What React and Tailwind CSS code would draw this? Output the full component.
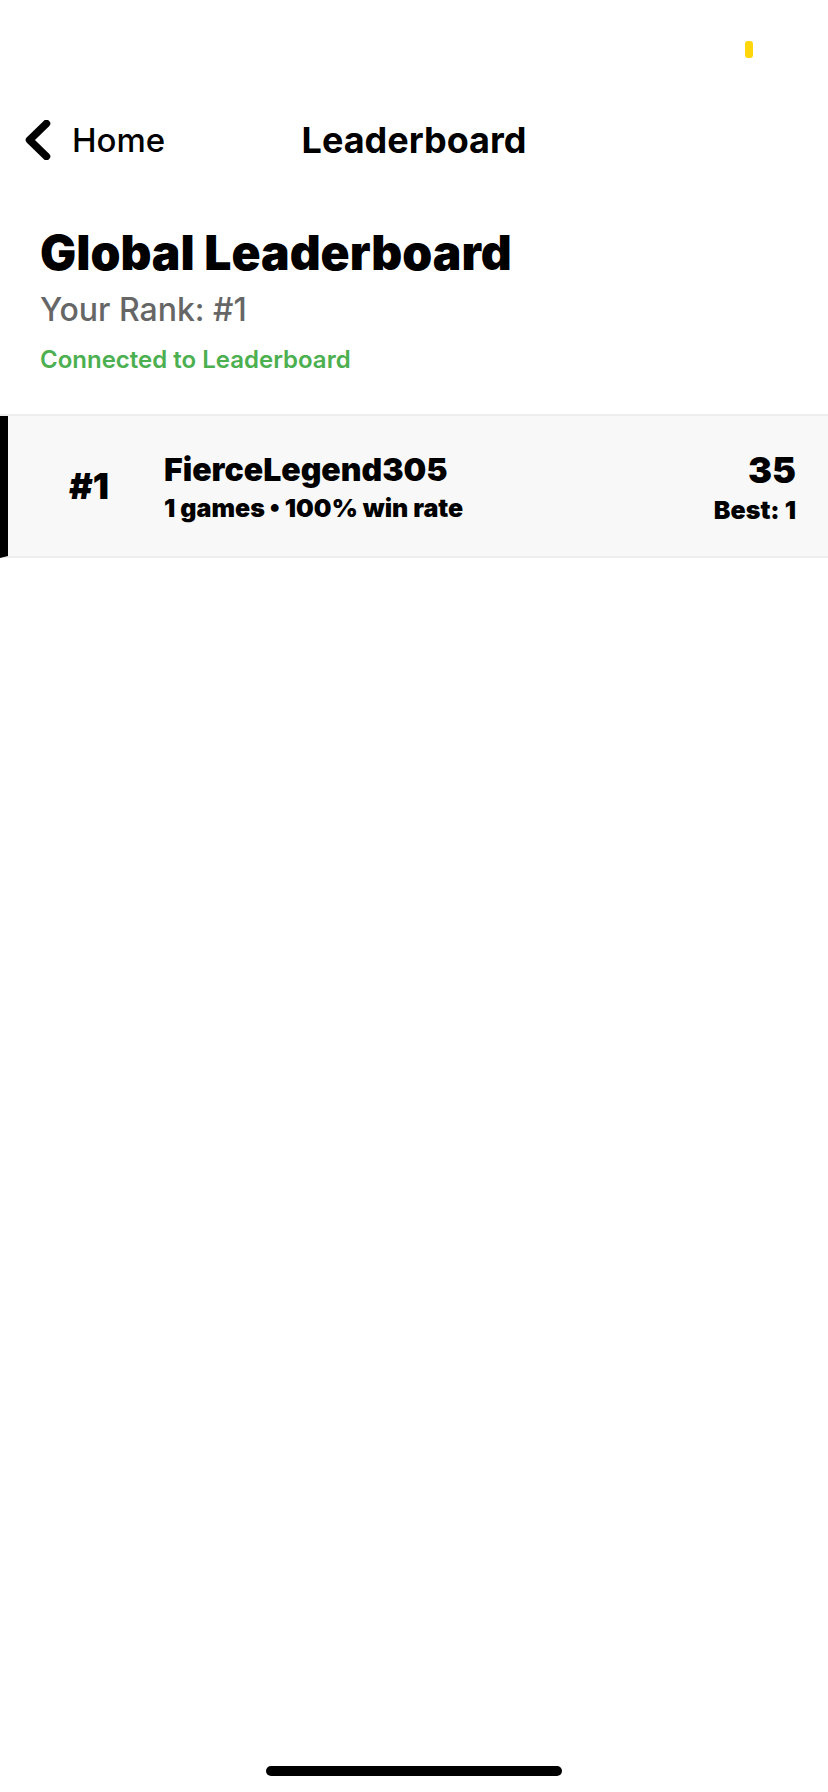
const players = [
  { rank: 1, name: "FierceLegend305", games: 1, winRate: 100, score: 35, best: 1 },
];

function StatusBar() {
  return (
    <div className="flex h-24 justify-end pt-[41px] pr-[75px]">
      <div className="h-[17px] w-2 rounded-[3px] bg-[#ffd60a]" />
    </div>
  );
}

function NavBar() {
  return (
    <nav className="grid h-22 grid-cols-[1fr_auto_1fr] items-center px-6">
      <a href="#home" className="flex items-center gap-5 text-[33px] leading-10 font-medium">
        <svg className="h-10 w-7" viewBox="0 0 28 40" fill="none" aria-hidden="true">
          <path
            d="M22.5 3.5 5.5 20 22.5 36.5"
            stroke="currentColor"
            strokeWidth="7.5"
            strokeLinecap="round"
            strokeLinejoin="round"
          />
        </svg>
        Home
      </a>
      <h1 className="text-[36px] leading-10 font-bold">Leaderboard</h1>
    </nav>
  );
}

function PlayerRow({ player }) {
  return (
    <li className="flex items-center border-b-2 border-l-8 border-b-[#eeeeee] border-l-black bg-[#f8f8f8] py-8 pr-8 pl-6">
      <div className="w-[114px] text-center text-[36px] leading-[44px] font-black">
        #{player.rank}
      </div>
      <div className="flex flex-1 flex-col gap-1 pl-[18px] font-black">
        <p className="text-[32px] leading-[40px]">{player.name}</p>
        <p className="text-[25px] leading-[28px]">
          {player.games} games • {player.winRate}% win rate
        </p>
      </div>
      <div className="flex flex-col gap-1 text-right font-black">
        <p className="text-[36px] leading-[44px]">{player.score}</p>
        <p className="text-[25px] leading-[28px]">Best: {player.best}</p>
      </div>
    </li>
  );
}

export default function App() {
  return (
    <div className="flex min-h-screen flex-col bg-white font-['Inter',sans-serif] text-black">
      <StatusBar />
      <NavBar />
      <main className="flex-1">
        <header className="border-b-2 border-[#eeeeee] px-10 pt-10 pb-10">
          <h2 className="text-[48px] leading-[58px] font-black">Global Leaderboard</h2>
          <p className="mt-2 text-[32px] leading-[40px] font-medium text-[#666666]">Your Rank: #1</p>
          <p className="mt-4 text-[24px] leading-[28px] font-semibold text-[#4caf50]">
            Connected to Leaderboard
          </p>
        </header>
        <ol>
          {players.map((player) => (
            <PlayerRow key={player.rank} player={player} />
          ))}
        </ol>
      </main>
      <div className="flex justify-center pb-4">
        <div className="h-[10px] w-[296px] rounded-full bg-black" />
      </div>
    </div>
  );
}
